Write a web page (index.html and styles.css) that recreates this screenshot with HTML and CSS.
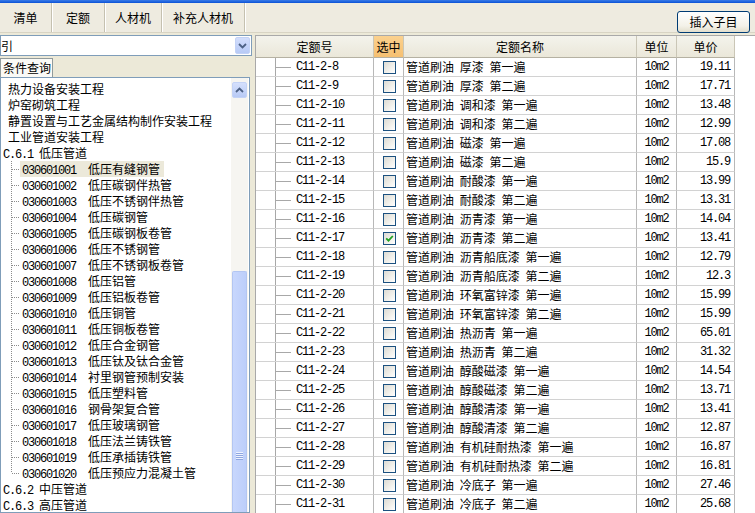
FILE: index.html
```html
<!DOCTYPE html>
<html lang="zh-CN">
<head>
<meta charset="utf-8">
<title>定额</title>
<link rel="stylesheet" href="styles.css">
</head>
<body>
<div class="titlebar"></div>
<div class="tabbar">
  <div class="tab t1">清单</div>
  <div class="tab t2">定额</div>
  <div class="tab t3">人材机</div>
  <div class="tab t4">补充人材机</div>
  <button class="insert-btn">插入子目</button>
</div>
<div class="main">
  <div class="left">
    <div class="combo">
      <span class="combo-text">引</span>
      <span class="combo-btn"><svg width="9" height="6" viewBox="0 0 9 6"><path d="M1 1 L4.5 4.5 L8 1" fill="none" stroke="#4D6185" stroke-width="1.8"/></svg></span>
    </div>
    <div class="subtabs"><div class="subtab">条件查询</div></div>
    <div class="treebox">
      <div class="tree">
        <div class="ti l1">热力设备安装工程</div>
        <div class="ti l1">炉窑砌筑工程</div>
        <div class="ti l1">静置设置与工艺金属结构制作安装工程</div>
        <div class="ti l1">工业管道安装工程</div>
        <div class="ti l0"><span class="sec">C.6.1</span>低压管道</div>
        <div class="ti ch"><span class="lab sel"><span class="code">030601001</span>低压有缝钢管</span></div>
        <div class="ti ch"><span class="lab"><span class="code">030601002</span>低压碳钢伴热管</span></div>
        <div class="ti ch"><span class="lab"><span class="code">030601003</span>低压不锈钢伴热管</span></div>
        <div class="ti ch"><span class="lab"><span class="code">030601004</span>低压碳钢管</span></div>
        <div class="ti ch"><span class="lab"><span class="code">030601005</span>低压碳钢板卷管</span></div>
        <div class="ti ch"><span class="lab"><span class="code">030601006</span>低压不锈钢管</span></div>
        <div class="ti ch"><span class="lab"><span class="code">030601007</span>低压不锈钢板卷管</span></div>
        <div class="ti ch"><span class="lab"><span class="code">030601008</span>低压铝管</span></div>
        <div class="ti ch"><span class="lab"><span class="code">030601009</span>低压铝板卷管</span></div>
        <div class="ti ch"><span class="lab"><span class="code">030601010</span>低压铜管</span></div>
        <div class="ti ch"><span class="lab"><span class="code">030601011</span>低压铜板卷管</span></div>
        <div class="ti ch"><span class="lab"><span class="code">030601012</span>低压合金钢管</span></div>
        <div class="ti ch"><span class="lab"><span class="code">030601013</span>低压钛及钛合金管</span></div>
        <div class="ti ch"><span class="lab"><span class="code">030601014</span>衬里钢管预制安装</span></div>
        <div class="ti ch"><span class="lab"><span class="code">030601015</span>低压塑料管</span></div>
        <div class="ti ch"><span class="lab"><span class="code">030601016</span>钢骨架复合管</span></div>
        <div class="ti ch"><span class="lab"><span class="code">030601017</span>低压玻璃钢管</span></div>
        <div class="ti ch"><span class="lab"><span class="code">030601018</span>低压法兰铸铁管</span></div>
        <div class="ti ch"><span class="lab"><span class="code">030601019</span>低压承插铸铁管</span></div>
        <div class="ti ch last"><span class="lab"><span class="code">030601020</span>低压预应力混凝土管</span></div>
        <div class="ti l0"><span class="sec">C.6.2</span>中压管道</div>
        <div class="ti l0"><span class="sec">C.6.3</span>高压管道</div>
      </div>
      <div class="vscroll">
        <div class="sb-up"><svg width="9" height="6" viewBox="0 0 9 6"><path d="M1 5 L4.5 1.5 L8 5" fill="none" stroke="#4D6185" stroke-width="1.8"/></svg></div>
        <div class="sb-thumb"><span class="grip"></span></div>
      </div>
    </div>
  </div>
  <div class="right">
    <div class="grid">
      <div class="gtable">
        <div class="grow head">
          <div class="hc">定额号</div><div class="hc sel">选中</div><div class="hc">定额名称</div><div class="hc">单位</div><div class="hc">单价</div>
        </div>
        <div class="grow"><div class="c0">C11-2-8</div><div class="c1"><span class="cb"></span></div><div class="c2">管道刷油 厚漆 第一遍</div><div class="c3">10m2</div><div class="c4">19.11</div></div>
        <div class="grow"><div class="c0">C11-2-9</div><div class="c1"><span class="cb"></span></div><div class="c2">管道刷油 厚漆 第二遍</div><div class="c3">10m2</div><div class="c4">17.71</div></div>
        <div class="grow"><div class="c0">C11-2-10</div><div class="c1"><span class="cb"></span></div><div class="c2">管道刷油 调和漆 第一遍</div><div class="c3">10m2</div><div class="c4">13.48</div></div>
        <div class="grow"><div class="c0">C11-2-11</div><div class="c1"><span class="cb"></span></div><div class="c2">管道刷油 调和漆 第二遍</div><div class="c3">10m2</div><div class="c4">12.99</div></div>
        <div class="grow"><div class="c0">C11-2-12</div><div class="c1"><span class="cb"></span></div><div class="c2">管道刷油 磁漆 第一遍</div><div class="c3">10m2</div><div class="c4">17.08</div></div>
        <div class="grow"><div class="c0">C11-2-13</div><div class="c1"><span class="cb"></span></div><div class="c2">管道刷油 磁漆 第二遍</div><div class="c3">10m2</div><div class="c4">15.9</div></div>
        <div class="grow"><div class="c0">C11-2-14</div><div class="c1"><span class="cb"></span></div><div class="c2">管道刷油 耐酸漆 第一遍</div><div class="c3">10m2</div><div class="c4">13.99</div></div>
        <div class="grow"><div class="c0">C11-2-15</div><div class="c1"><span class="cb"></span></div><div class="c2">管道刷油 耐酸漆 第二遍</div><div class="c3">10m2</div><div class="c4">13.31</div></div>
        <div class="grow"><div class="c0">C11-2-16</div><div class="c1"><span class="cb"></span></div><div class="c2">管道刷油 沥青漆 第一遍</div><div class="c3">10m2</div><div class="c4">14.04</div></div>
        <div class="grow"><div class="c0">C11-2-17</div><div class="c1"><span class="cb on"><svg width="9" height="9" viewBox="0 0 9 9"><path d="M1.2 4.3 L3.5 6.6 L7.8 2" fill="none" stroke="#21A121" stroke-width="1.8"/></svg></span></div><div class="c2">管道刷油 沥青漆 第二遍</div><div class="c3">10m2</div><div class="c4">13.41</div></div>
        <div class="grow"><div class="c0">C11-2-18</div><div class="c1"><span class="cb"></span></div><div class="c2">管道刷油 沥青船底漆 第一遍</div><div class="c3">10m2</div><div class="c4">12.79</div></div>
        <div class="grow"><div class="c0">C11-2-19</div><div class="c1"><span class="cb"></span></div><div class="c2">管道刷油 沥青船底漆 第二遍</div><div class="c3">10m2</div><div class="c4">12.3</div></div>
        <div class="grow"><div class="c0">C11-2-20</div><div class="c1"><span class="cb"></span></div><div class="c2">管道刷油 环氧富锌漆 第一遍</div><div class="c3">10m2</div><div class="c4">15.99</div></div>
        <div class="grow"><div class="c0">C11-2-21</div><div class="c1"><span class="cb"></span></div><div class="c2">管道刷油 环氧富锌漆 第二遍</div><div class="c3">10m2</div><div class="c4">15.99</div></div>
        <div class="grow"><div class="c0">C11-2-22</div><div class="c1"><span class="cb"></span></div><div class="c2">管道刷油 热沥青 第一遍</div><div class="c3">10m2</div><div class="c4">65.01</div></div>
        <div class="grow"><div class="c0">C11-2-23</div><div class="c1"><span class="cb"></span></div><div class="c2">管道刷油 热沥青 第二遍</div><div class="c3">10m2</div><div class="c4">31.32</div></div>
        <div class="grow"><div class="c0">C11-2-24</div><div class="c1"><span class="cb"></span></div><div class="c2">管道刷油 醇酸磁漆 第一遍</div><div class="c3">10m2</div><div class="c4">14.54</div></div>
        <div class="grow"><div class="c0">C11-2-25</div><div class="c1"><span class="cb"></span></div><div class="c2">管道刷油 醇酸磁漆 第二遍</div><div class="c3">10m2</div><div class="c4">13.71</div></div>
        <div class="grow"><div class="c0">C11-2-26</div><div class="c1"><span class="cb"></span></div><div class="c2">管道刷油 醇酸清漆 第一遍</div><div class="c3">10m2</div><div class="c4">13.41</div></div>
        <div class="grow"><div class="c0">C11-2-27</div><div class="c1"><span class="cb"></span></div><div class="c2">管道刷油 醇酸清漆 第二遍</div><div class="c3">10m2</div><div class="c4">12.87</div></div>
        <div class="grow"><div class="c0">C11-2-28</div><div class="c1"><span class="cb"></span></div><div class="c2">管道刷油 有机硅耐热漆 第一遍</div><div class="c3">10m2</div><div class="c4">16.87</div></div>
        <div class="grow"><div class="c0">C11-2-29</div><div class="c1"><span class="cb"></span></div><div class="c2">管道刷油 有机硅耐热漆 第二遍</div><div class="c3">10m2</div><div class="c4">16.81</div></div>
        <div class="grow"><div class="c0">C11-2-30</div><div class="c1"><span class="cb"></span></div><div class="c2">管道刷油 冷底子 第一遍</div><div class="c3">10m2</div><div class="c4">27.46</div></div>
        <div class="grow"><div class="c0">C11-2-31</div><div class="c1"><span class="cb"></span></div><div class="c2">管道刷油 冷底子 第二遍</div><div class="c3">10m2</div><div class="c4">25.68</div></div>
      </div>
    </div>
  </div>
</div>
</body>
</html>
```

FILE: styles.css
```css
* { box-sizing: border-box; }
html, body { margin: 0; padding: 0; }
body {
  width: 755px;
  height: 513px;
  overflow: hidden;
  background: #ECE9D8;
  font-family: "Noto Sans CJK SC", sans-serif;
  font-size: 12px;
  color: #000;
  line-height: 16px;
}

.titlebar {
  height: 3px;
  background: linear-gradient(#3B7BE8, #0A52D6);
}

.tabbar {
  height: 30px;
  display: flex;
  border-bottom: 1px solid #D8D4C4;
  background: #EEEBE0;
}
.tab {
  display: flex;
  align-items: center;
  justify-content: center;
  border-right: 1px solid #C5C1B0;
  box-shadow: 1px 0 0 #FFFFFF;
  padding-top: 1px;
}
.t1 { width: 52px; }
.t2 { width: 53px; }
.t3 { width: 57px; }
.t4 { width: 83px; }

.insert-btn {
  margin: 8px 5px 0 auto;
  width: 73px;
  height: 22px;
  border: 1px solid #003C74;
  border-radius: 3px;
  background: linear-gradient(#FFFFFF, #F3F1E8 70%, #E2DECD);
  font-family: "Noto Sans CJK SC", sans-serif;
  font-size: 12px;
  color: #000;
  padding: 0;
  line-height: 18px;
}

.main {
  display: flex;
  height: 480px;
}

.left {
  width: 252px;
  display: flex;
  flex-direction: column;
}
.combo {
  margin-top: 2px;
  height: 21px;
  width: 252px;
  border: 1px solid #7F9DB9;
  background: #FFFFFF;
  display: flex;
  align-items: center;
}
.combo-text { flex: 1; padding-left: 0; line-height: 18px; }
.combo-btn {
  width: 15px;
  height: 17px;
  margin-right: 1px;
  border-radius: 2px;
  background: linear-gradient(#D3DEFC, #B7CAF6);
  border: 1px solid #C3D2F6;
  display: flex;
  align-items: center;
  justify-content: center;
}

.subtabs {
  margin-top: 2px;
  height: 19px;
  display: flex;
}
.subtab {
  width: 53px;
  height: 19px;
  border: 1px solid #919B9C;
  border-bottom: none;
  background: #FBFAF6;
  padding-left: 2px;
  line-height: 18px;
}

.treebox {
  flex: 1;
  width: 250px;
  border: 1px solid #7F9DB9;
  background: #FFFFFF;
  display: flex;
  overflow: hidden;
}
.tree {
  flex: 1;
  padding-top: 3px;
  white-space: nowrap;
  overflow: hidden;
}
.ti { height: 16px; line-height: 16px; }
.l1 { padding-left: 7px; }
.l0 { padding-left: 2px; }
.sec, .code {
  font-family: "Liberation Mono", monospace;
  letter-spacing: -1.2px;
  display: inline-block;
}
.sec { width: 36px; }
.code { width: 66px; }
.ch {
  padding-left: 19px;
  background-image:
    repeating-linear-gradient(to bottom, #8C8C8C 0 1px, transparent 1px 2px),
    repeating-linear-gradient(to right, #8C8C8C 0 1px, transparent 1px 2px);
  background-size: 1px 16px, 8px 1px;
  background-position: 10px 0, 11px 8px;
  background-repeat: no-repeat;
}
.ch.last { background-size: 1px 8px, 8px 1px; }
.lab {
  display: inline-block;
  height: 16px;
  padding: 0 4px 0 2px;
}
.lab.sel { background: #ECE9DA; }

.vscroll {
  width: 17px;
  margin-right: 1px;
  background: #F6F5F1;
  display: flex;
  flex-direction: column;
  padding-top: 4px;
}
.sb-up {
  height: 16px;
  margin: 0 1px;
  border-radius: 2px;
  background: linear-gradient(#D5E0FC, #B8CAF5);
  border: 1px solid #C4D3F6;
  display: flex;
  align-items: center;
  justify-content: center;
}
.sb-thumb {
  margin: 173px 1px 0;
  flex: 1;
  border: 1px solid #B3C6F2;
  border-bottom: none;
  border-radius: 2px 2px 0 0;
  background: linear-gradient(to right, #C8D7FD, #BCCEFA);
  display: flex;
  justify-content: center;
  padding-top: 180px;
}
.grip {
  width: 7px;
  height: 8px;
  background: repeating-linear-gradient(to bottom, #EEF3FF 0 1px, #8EA6E0 1px 2px);
}

.right {
  flex: 1;
  padding: 2px 0 0 3px;
}
.grid {
  height: 478px;
  background: #FFFFFF;
  border-top: 1px solid #A9A9A9;
  border-left: 1px solid #A9A9A9;
  overflow: hidden;
}
.gtable { width: 479px; }
.grow {
  display: grid;
  grid-template-columns: 118px 30px 233px 40px 58px;
  height: 19px;
}
.grow > div {
  border-right: 1px solid #B8B8B8;
  border-bottom: 1px solid #D2D2D2;
  white-space: nowrap;
  overflow: hidden;
  line-height: 18px;
}
.grow.head { height: 22px; }
.grow.head > .hc {
  background: linear-gradient(#F4F3EC, #EAE7D9);
  border-right: 1px solid #CAC6B6;
  border-bottom: 1px solid #B5B1A2;
  text-align: center;
  line-height: 21px;
}
.grow.head > .hc.sel {
  background: linear-gradient(#FBD18E, #F6C071);
}
.c0 {
  font-family: "Liberation Mono", monospace;
  letter-spacing: -1.2px;
  padding-left: 40px;
  background-image:
    linear-gradient(#A8A8A8, #A8A8A8),
    linear-gradient(#A8A8A8, #A8A8A8);
  background-size: 1px 19px, 16px 1px;
  background-position: 19px 0, 19px 9px;
  background-repeat: no-repeat;
  background-origin: border-box;
}
.c1 {
  display: flex;
  align-items: center;
  justify-content: center;
  padding-top: 1px;
  padding-left: 1px;
}
.cb {
  width: 13px;
  height: 13px;
  border: 1px solid #1C5180;
  background: linear-gradient(135deg, #DCDBD4, #F2F1EC 60%, #FFFFFF);
  display: flex;
  align-items: center;
  justify-content: center;
}
.c2 { padding-left: 2px; word-spacing: 3px; }
.c3 {
  text-align: center;
  font-family: "Liberation Mono", monospace;
  letter-spacing: -1.2px;
}
.c4 {
  text-align: right;
  padding-right: 4px;
  font-family: "Liberation Mono", monospace;
  letter-spacing: -1.2px;
}
```
